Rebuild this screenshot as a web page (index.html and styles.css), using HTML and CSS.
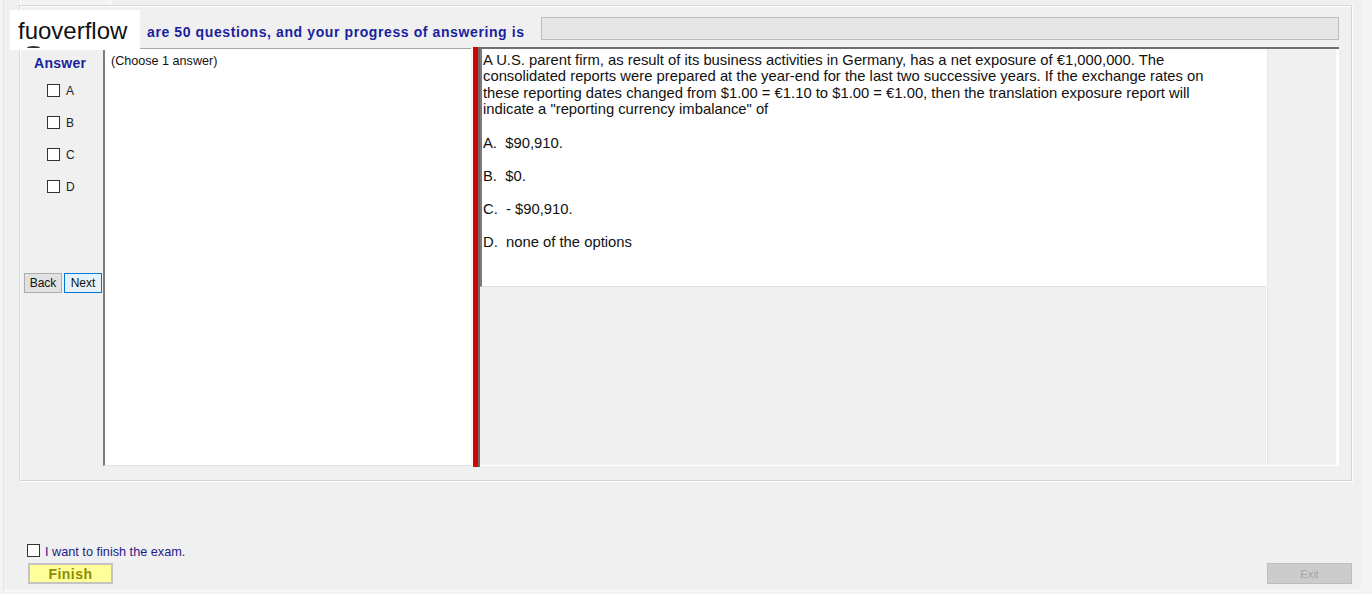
FILE: index.html
```html
<!DOCTYPE html>
<html lang="en">
<head>
    <meta charset="UTF-8">
    <meta name="viewport" content="width=device-width, initial-scale=1.0">
    <title>Exam</title>
    <link rel="stylesheet" href="styles.css">
</head>
<body>
<div class="window">
    <div class="tabs">
        <div class="tab"></div>
    </div>
    <div class="watermark">fuoverflow<span class="blob"></span></div>
    <div class="group">
        <div class="header">
            <span class="progress-text">are 50 questions, and your progress of answering is</span>
            <div class="progress"></div>
        </div>
        <div class="content">
            <div class="answer-col">
                <div class="answer-title">Answer</div>
                <ul class="opts">
                    <li><span class="box"></span>A</li>
                    <li><span class="box"></span>B</li>
                    <li><span class="box"></span>C</li>
                    <li><span class="box"></span>D</li>
                </ul>
                <div class="nav">
                    <button class="btn">Back</button>
                    <button class="btn next">Next</button>
                </div>
            </div>
            <div class="choose">(Choose 1 answer)</div>
            <div class="splitter"></div>
            <div class="question-pane">
                <div class="question">
                    <p class="stem">A U.S. parent firm, as result of its business activities in Germany, has a net exposure of €1,000,000. The consolidated reports were prepared at the year-end for the last two successive years. If the exchange rates on these reporting dates changed from $1.00 = €1.10 to $1.00 = €1.00, then the translation exposure report will indicate a "reporting currency imbalance" of</p>
                    <p>A.&nbsp; $90,910.</p>
                    <p>B.&nbsp; $0.</p>
                    <p>C.&nbsp; - $90,910.</p>
                    <p>D.&nbsp; none of the options</p>
                </div>
                <div class="pane-side"></div>
            </div>
        </div>
    </div>
    <div class="footer">
        <div class="finish-check"><span class="box"></span><span class="finish-label">I want to finish the exam.</span></div>
        <div class="footer-buttons">
            <button class="finish">Finish</button>
            <button class="exit">Exit</button>
        </div>
    </div>
</div>
</body>
</html>
```

FILE: styles.css
```css
*{
    margin: 0;
    padding: 0;
    box-sizing: border-box;
}
body{
    background: #f4f4f4;
    font-family: "Liberation Sans", Arial, sans-serif;
    color: #111;
}
.window{
    position: relative;
    width: 1358px;
    height: 591px;
    margin-left: 3px;
    background: #f0f0f0;
    border-left: 1px solid #e4e4e4;
    border-bottom: 1px solid #fafafa;
}
.tabs{
    height: 5px;
    padding-left: 16px;
}
.tab{
    width: 91px;
    height: 5px;
    border-left: 1px solid #fff;
    border-right: 1px solid #fff;
    background: #f3f3f3;
}
.watermark{
    position: absolute;
    left: 6px;
    top: 10px;
    width: 130px;
    height: 40px;
    background: #fff;
    font-size: 24px;
    line-height: 42px;
    padding-left: 8px;
    color: #111;
    z-index: 10;
}
.blob{
    position: absolute;
    left: 17px;
    bottom: 0;
    width: 13px;
    height: 4px;
    border-top: 2px solid #333;
    border-radius: 50% 50% 0 0;
}
.group{
    width: 1333px;
    height: 476px;
    margin-left: 15px;
    border: 1px solid #d6d6d6;
    box-shadow: inset 1px 1px 0 #fff, 1px 1px 0 #fff;
    padding: 11px 12px 14px 4px;
}
.header{
    display: flex;
    justify-content: space-between;
    align-items: flex-end;
    height: 23px;
}
.progress-text{
    font-size: 14px;
    font-weight: bold;
    letter-spacing: 0.6px;
    line-height: 16px;
    color: #1a1f9c;
    padding-left: 123px;
}
.progress{
    width: 798px;
    height: 23px;
    background: #e6e6e6;
    border: 1px solid #bcbcbc;
}
.content{
    display: flex;
    height: 419px;
    margin-top: 7px;
}
.answer-col{
    width: 79px;
    padding-top: 8px;
    display: flex;
    flex-direction: column;
}
.answer-title{
    font-size: 14px;
    font-weight: bold;
    letter-spacing: 0.3px;
    color: #1a1f9c;
    line-height: 16px;
    padding-left: 10px;
}
.opts{
    list-style: none;
    padding-left: 23px;
    margin-top: 13px;
}
.opts li{
    display: flex;
    align-items: center;
    height: 13px;
    margin-bottom: 19px;
    font-size: 12px;
    color: #222;
}
.box{
    display: inline-block;
    width: 13px;
    height: 13px;
    background: #fff;
    border: 1px solid #333;
    margin-right: 6px;
}
.nav{
    display: flex;
    gap: 2px;
    margin-top: 61px;
}
.btn{
    width: 38px;
    height: 20px;
    font-family: "Liberation Sans", Arial, sans-serif;
    font-size: 12px;
    color: #111;
    background: #e1e1e1;
    border: 1px solid #adadad;
}
.btn.next{
    background: #e5f1fb;
    border-color: #0078d7;
}
.choose{
    width: 368px;
    margin-top: 1px;
    background: #fff;
    border-top: 1px solid #a8a8a8;
    border-left: 2px solid #7c7c7c;
    border-bottom: 1px solid #e2e2e2;
    font-size: 12.6px;
    line-height: 14px;
    padding: 5px 0 0 6px;
    color: #111;
}
.splitter{
    width: 8px;
    margin-left: 1px;
    height: 420px;
    background: #d80000;
    border-right: 2px solid #6a6a6a;
    border-left: 1px solid #f8f8f8;
}
.question-pane{
    flex: 1;
    display: flex;
    border-top: 2px solid #6f6f6f;
    border-bottom: 1px solid #fff;
    box-shadow: inset -2px 0 0 #fff;
}
.question{
    width: 786px;
    height: 238px;
    background: #fff;
    border-left: 2px solid #7a7a7a;
    border-bottom: 1px solid #dedede;
    padding: 3px 0 0 1px;
    font-size: 14.8px;
    line-height: 16.3px;
    color: #111;
}
.question p{
    margin-bottom: 16.7px;
}
.question .stem{
    max-width: 740px;
    margin-bottom: 17.6px;
}
.pane-side{
    flex: 1;
    margin-right: 2px;
    border-left: 1px solid #fff;
    border-right: 1px solid #fff;
    box-shadow: inset 1px 0 0 #e6e6e6;
}
.footer{
    padding-left: 23px;
}
.finish-check{
    display: flex;
    align-items: center;
    margin-top: 63px;
    height: 13px;
    font-size: 12.7px;
    color: #1c1c8a;
}
.finish-check .box{
    margin-right: 5px;
}
.finish-label{
    padding-top: 3px;
}
.footer-buttons{
    display: flex;
    justify-content: space-between;
    margin-top: 6px;
    width: 1325px;
}
.finish{
    width: 85px;
    height: 21px;
    margin-left: 1px;
    background: #ffff99;
    border: 2px solid #c4c4c4;
    font-family: "Liberation Sans", Arial, sans-serif;
    font-size: 14px;
    font-weight: bold;
    letter-spacing: 0.5px;
    color: #8c8c00;
}
.exit{
    width: 85px;
    height: 21px;
    background: #cccccc;
    border: 1px solid #bdbdbd;
    font-family: "Liberation Sans", Arial, sans-serif;
    font-size: 11px;
    color: #a6a6a6;
}
```
